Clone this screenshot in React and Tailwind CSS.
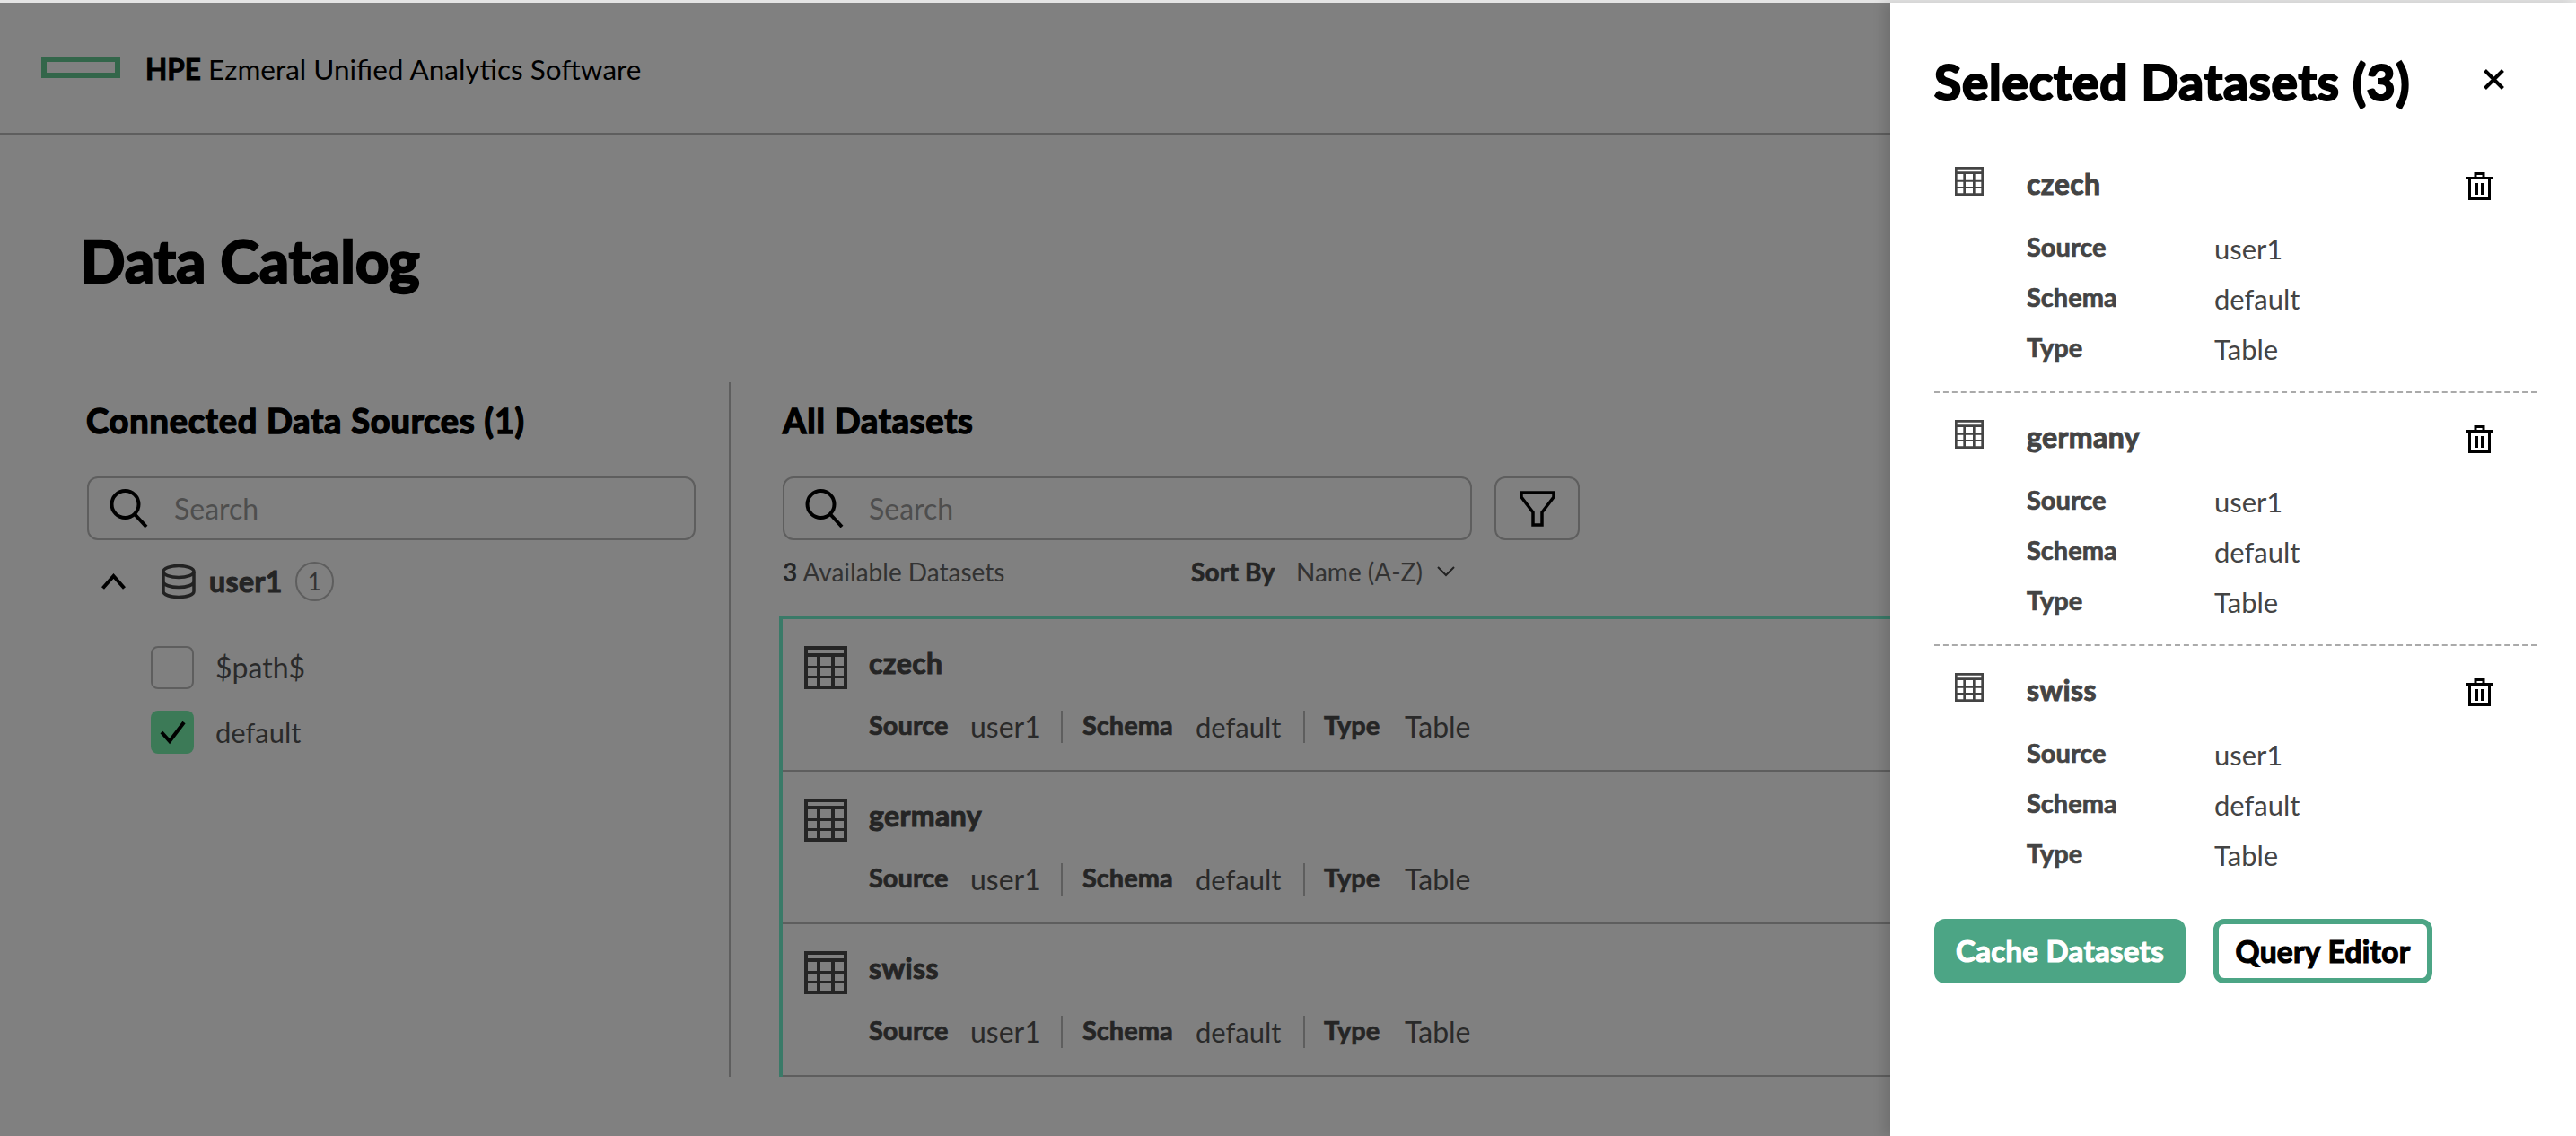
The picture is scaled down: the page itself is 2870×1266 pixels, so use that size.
const font = { fontFamily: '"Lato","Noto Sans",sans-serif' };

function TableIcon({ className }) {
  return (
    <svg viewBox="0 0 48 48" preserveAspectRatio="none" className={className} fill="currentColor">
      <path
        fillRule="evenodd"
        d="M0 0h48v48H0z M4 4v4h40V4z M4 12v10h10V12z M18 12v10h12V12z M34 12v10h10V12z M4 25v8h10v-8z M18 25v8h12v-8z M34 25v8h10v-8z M4 36v8h10v-8z M18 36v8h12v-8z M34 36v8h10v-8z"
      />
    </svg>
  );
}

function SearchIcon() {
  return (
    <svg viewBox="0 0 43 43" className="w-[43px] h-[43px] shrink-0" fill="none" stroke="#000" strokeWidth="4">
      <circle cx="17.5" cy="17" r="15" />
      <path d="M28 28l13 14" />
    </svg>
  );
}

function SearchBox({ className, gap }) {
  return (
    <div className={`h-[71px] border-2 border-[#5e5e5e] rounded-[12px] flex items-center ${className}`}>
      <SearchIcon />
      <span className={`text-[32px] text-[#4e4e4e] ${gap}`}>Search</span>
    </div>
  );
}

function DatasetRow({ name }) {
  return (
    <div className="h-[170px] border-b-2 border-[#5e5e5e] flex pl-[24px] gap-[24px] pt-[30px]">
      <TableIcon className="w-[48px] h-[48px] text-[#252525] shrink-0" />
      <div>
        <div className="h-[40px] leading-[40px] text-[32px] tracking-[0.4px] font-bold text-[#252525] -translate-y-[1px] [-webkit-text-stroke:1px_#252525]">{name}</div>
        <div className="mt-[32px] flex items-center h-[36px] text-[32px] text-[#2a2a2a] whitespace-nowrap">
          <span className="font-bold text-[#252525] text-[29px] w-[113px] -translate-y-[2px] [-webkit-text-stroke:0.7px_#252525]">Source</span>
          <span className="w-[101px]">user1</span>
          <span className="w-[2px] h-[36px] bg-[#5e5e5e] mr-[22px]" />
          <span className="font-bold text-[#252525] text-[29px] w-[126px] -translate-y-[2px] [-webkit-text-stroke:0.7px_#252525]">Schema</span>
          <span className="w-[120px] text-[31px]">default</span>
          <span className="w-[2px] h-[36px] bg-[#5e5e5e] mr-[21px]" />
          <span className="font-bold text-[#252525] text-[29px] w-[90px] -translate-y-[2px] [-webkit-text-stroke:0.7px_#252525]">Type</span>
          <span>Table</span>
        </div>
      </div>
    </div>
  );
}

function SelectedBlock({ name, dashed }) {
  return (
    <div className={`h-[282px] flex pl-[23px] ${dashed ? "border-b-2 border-dashed border-[#aaaaaa]" : ""}`}>
      <TableIcon className="w-[32px] h-[32px] text-[#444444] shrink-0 mt-[30px]" />
      <div className="ml-[48px] pt-[29px] text-[#444444]">
        <div className="h-[40px] leading-[40px] text-[32px] tracking-[0.4px] font-bold [-webkit-text-stroke:1px_#444444]">{name}</div>
        <div className="mt-[23px]">
          {[
            ["Source", "user1"],
            ["Schema", "default"],
            ["Type", "Table"],
          ].map(([k, v]) => (
            <div key={k} className="h-[56px] flex items-center">
              <span className="w-[209px] font-bold text-[29px] -translate-y-[1px] [-webkit-text-stroke:0.7px_#444444]">{k}</span>
              <span className="text-[31px] translate-y-[1px]">{v}</span>
            </div>
          ))}
        </div>
      </div>
      <svg viewBox="0 0 29 31" className="ml-auto mr-[49px] mt-[36px] w-[29px] h-[31px] shrink-0" fill="none" stroke="#000" strokeWidth="3">
        <path d="M0 6.500h29M3.500 6.500v23h22v-23M10 6.500V1.500h9v5M11.500 12v13M17.500 12v13" />
      </svg>
    </div>
  );
}

export default function App() {
  return (
    <div className="w-[2870px] h-[1266px] overflow-hidden flex flex-col bg-white" style={font}>
      <div className="h-[3px] bg-[#e4e4e4] shrink-0" />
      <div className="flex-1 flex min-h-0">
        <main className="flex-1 min-w-0 bg-[#808080] overflow-hidden text-black">
          <header className="h-[147px] border-b-2 border-[#5e5e5e] flex items-center pl-[46px]">
            <div className="w-[88px] h-[24px] border-[6px] border-[#33664a] -mt-[2px]" />
            <div className="ml-[28px] text-[31.500px] whitespace-nowrap translate-y-[2px]">
              <span className="font-bold [-webkit-text-stroke:0.9px_#000]">HPE</span> Ezmeral Unified Analytics Software
            </div>
          </header>
          <h1 className="ml-[90px] mt-[100px] h-[80px] leading-[80px] text-[65px] tracking-[0.3px] font-bold [-webkit-text-stroke:2.500px_#000]">Data Catalog</h1>
          <div className="mt-[96px] flex h-[774px]">
            <section className="w-[814px] pl-[96px] border-r-2 border-[#5e5e5e] shrink-0">
              <h2 className="h-[84px] leading-[84px] text-[38px] tracking-[0.8px] font-bold [-webkit-text-stroke:1.500px_#000]">Connected Data Sources (1)</h2>
              <SearchBox className="ml-[1px] mt-[21px] w-[678px] pl-[23px]" gap="ml-[29px]" />
              <div className="mt-[24px] h-[44px] flex items-center">
                <svg viewBox="0 0 27 18" className="ml-[17px] w-[27px] h-[18px]" fill="none" stroke="#000" strokeWidth="4">
                  <path d="M1.500 16.500L13.500 3l12 13.500" />
                </svg>
                <svg viewBox="0 0 38 38" className="ml-[40px] w-[38px] h-[38px] text-[#222]" fill="none" stroke="currentColor" strokeWidth="3.500">
                  <ellipse cx="19" cy="8" rx="17" ry="6.500" />
                  <path d="M2 8v22c0 4 8 6.500 17 6.500s17-2.500 17-6.500V8M2 19c0 4 8 6.500 17 6.500s17-2.500 17-6.500" />
                </svg>
                <span className="ml-[15px] text-[32px] tracking-[0.4px] font-bold text-[#252525] [-webkit-text-stroke:1.100px_#252525]">user1</span>
                <span className="ml-[14px] w-[43px] h-[44px] rounded-full border-[2px] border-[#5e5e5e] flex items-center justify-center text-[26px] text-[#333]">1</span>
              </div>
              <div className="mt-[50px] ml-[72px] flex items-center h-[48px]">
                <span className="w-[48px] h-[48px] rounded-[8px] border-2 border-[#5e5e5e]" />
                <span className="ml-[24px] text-[32px] text-[#2a2a2a]">$path$</span>
              </div>
              <div className="mt-[24px] ml-[72px] flex items-center h-[48px]">
                <span className="w-[48px] h-[48px] rounded-[8px] bg-[#3c7a57] flex">
                  <svg viewBox="0 0 48 48" className="w-[48px] h-[48px]" fill="none" stroke="#000" strokeWidth="4">
                    <path d="M12 24l9 10L37 13" />
                  </svg>
                </span>
                <span className="ml-[24px] text-[31px] text-[#2a2a2a]">default</span>
              </div>
            </section>
            <section className="flex-1 min-w-0 pl-[54px]">
              <h2 className="ml-[4px] h-[84px] leading-[84px] text-[38px] tracking-[0.8px] font-bold [-webkit-text-stroke:1.500px_#000]">All Datasets</h2>
              <div className="ml-[4px] mt-[21px] flex gap-[25px]">
                <SearchBox className="w-[768px] pl-[23px]" gap="ml-[28px]" />
                <button className="w-[95px] h-[71px] border-2 border-[#5e5e5e] rounded-[12px] flex items-center justify-center">
                  <svg viewBox="0 0 40 40" className="w-[40px] h-[40px]" fill="none" stroke="#000" strokeWidth="3.500">
                    <path d="M2 2h36v5L25 24v14H15V24L2 7z" />
                  </svg>
                </button>
              </div>
              <div className="ml-[4px] mt-[17px] h-[36px] flex items-center text-[28px] text-[#333] whitespace-nowrap">
                <span className="w-[455px]"><b className="text-[#252525]">3</b> Available Datasets</span>
                <span className="font-bold text-[#252525] w-[118px] tracking-[0.2px] [-webkit-text-stroke:0.7px_#252525]">Sort By</span>
                <span className="-ml-[1px]">Name (A-Z)</span>
                <svg viewBox="0 0 20 12" className="ml-[16px] w-[20px] h-[12px]" fill="none" stroke="#222" strokeWidth="2">
                  <path d="M1 1l9 9 9-9" />
                </svg>
              </div>
              <div className="mt-[31px] border-l-[4px] border-t-[4px] border-[#3a7a68]">
                <DatasetRow name="czech" />
                <DatasetRow name="germany" />
                <DatasetRow name="swiss" />
              </div>
            </section>
          </div>
        </main>
        <aside className="w-[764px] shrink-0 bg-white pl-[49px] pr-[44px] shadow-[-8px_0_12px_rgba(0,0,0,0.12)] z-10">
          <div className="mt-[58px] h-[60px] mb-[35px] flex items-center justify-between pr-[36px]">
            <h2 className="text-[55px] tracking-[0.8px] font-bold text-black whitespace-nowrap [-webkit-text-stroke:2.200px_#000]">Selected Datasets (3)</h2>
            <svg viewBox="0 0 23 23" className="w-[23px] h-[23px] -mt-[6px]" fill="none" stroke="#000" strokeWidth="4">
              <path d="M1.500 1.500l20 20M21.500 1.500l-20 20" />
            </svg>
          </div>
          <SelectedBlock name="czech" dashed />
          <SelectedBlock name="germany" dashed />
          <SelectedBlock name="swiss" />
          <div className="mt-[22px] flex gap-[31px]">
            <button className="w-[280px] h-[72px] rounded-[12px] bg-[#4ca585] text-white text-[33px] tracking-[0.3px] font-bold [-webkit-text-stroke:1.200px_#fff]">Cache Datasets</button>
            <button className="w-[244px] h-[72px] rounded-[12px] border-[6px] border-[#4ca585] text-black text-[33.500px] tracking-[0.3px] font-bold [-webkit-text-stroke:1.200px_#000]">Query Editor</button>
          </div>
        </aside>
      </div>
    </div>
  );
}
